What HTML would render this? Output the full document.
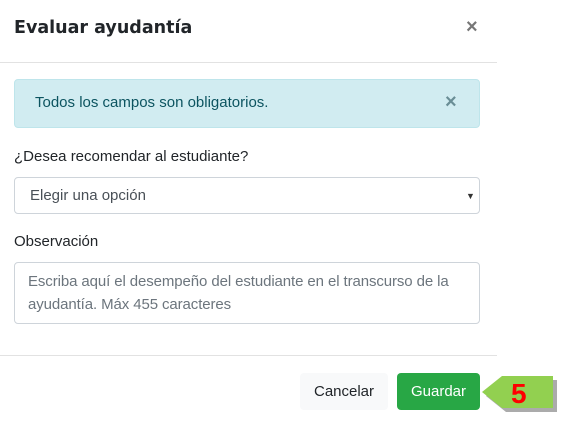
<!DOCTYPE html>
<html><head><style>
body{margin:0;width:563px;height:440px;background:#fff;font-family:"Liberation Sans",sans-serif;position:relative;overflow:hidden;color:#212529}
.a{position:absolute}
</style></head><body>
<div class="a" style="left:14px;top:18px;font-size:17.5px;font-weight:bold;color:#212529;font-family:'DejaVu Sans',sans-serif">Evaluar ayudantía</div>
<div class="a" style="left:466px;top:16px;font-size:20px;font-weight:bold;color:#777">×</div>
<div class="a" style="left:0;top:62px;width:497px;height:1px;background:#e2e2e2"></div>
<div class="a" style="left:14px;top:79px;width:464px;height:47px;background:#d1ecf1;border:1px solid #bee5eb;border-radius:4px"></div>
<div class="a" style="left:35px;top:94px;font-size:15px;color:#0c5460">Todos los campos son obligatorios.</div>
<div class="a" style="left:445px;top:91px;font-size:20px;font-weight:bold;color:#6a8e96">×</div>
<div class="a" style="left:14px;top:148px;font-size:15px">¿Desea recomendar al estudiante?</div>
<div class="a" style="left:14px;top:177px;width:464px;height:35px;border:1px solid #ced4da;border-radius:4px"></div>
<div class="a" style="left:30px;top:187px;font-size:15px;color:#495057">Elegir una opción</div>
<div class="a" style="left:466px;top:191px;font-size:9px;color:#333">▼</div>
<div class="a" style="left:14px;top:233px;font-size:15px">Observación</div>
<div class="a" style="left:14px;top:262px;width:464px;height:60px;border:1px solid #ced4da;border-radius:4px"></div>
<div class="a" style="left:28px;top:270px;width:450px;font-size:15px;line-height:23px;color:#6c757d;letter-spacing:-0.1px">Escriba aquí el desempeño del estudiante en el transcurso de la ayudantía. Máx 455 caracteres</div>
<div class="a" style="left:0;top:355px;width:497px;height:1px;background:#e2e2e2"></div>
<div class="a" style="left:300px;top:373px;width:88px;height:37px;background:#f8f9fa;border-radius:4px;font-size:15px;line-height:37px;text-align:center">Cancelar</div>
<div class="a" style="left:397px;top:373px;width:83px;height:37px;background:#28a745;border-radius:4px;font-size:15px;line-height:37px;text-align:center;color:#fff">Guardar</div>
<svg class="a" style="left:480px;top:372px" width="83" height="44"><polygon points="2,20 22,4 73,4 73,36 22,36" fill="#444" opacity=".45" transform="translate(4,4)"/><polygon points="2,20 22,4 73,4 73,36 22,36" fill="#92d050"/><text x="31" y="31" font-family="Liberation Sans" font-weight="bold" font-size="28" fill="#f00">5</text></svg>
</body></html>
